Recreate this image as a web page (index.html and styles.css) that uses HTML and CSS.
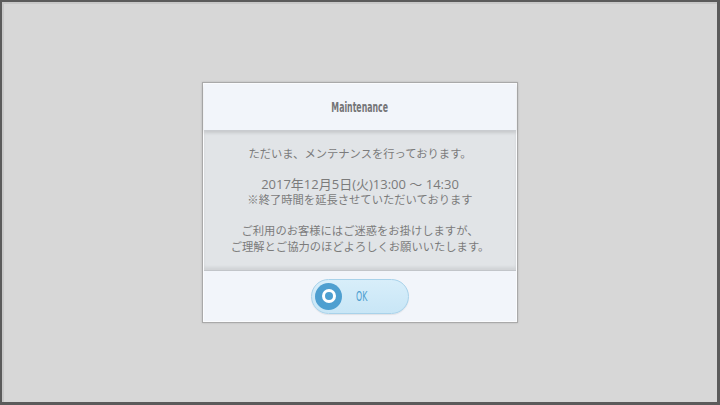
FILE: index.html
```html
<!DOCTYPE html>
<html lang="ja">
<head>
    <meta charset="UTF-8">
    <meta name="viewport" content="width=device-width, initial-scale=1.0">
    <title>Maintenance</title>
    <link rel="stylesheet" href="styles.css">
</head>
<body>
    <div class="screen">
        <div class="dialog">
            <header class="dialog-head">
                <h1>Maintenance</h1>
            </header>
            <div class="dialog-body">
                <p>ただいま、メンテナンスを行っております。</p>
                <p><span class="date">2017年12月5日(火)13:00 ～ 14:30</span><br>※終了時間を延長させていただいております</p>
                <p>ご利用のお客様にはご迷惑をお掛けしますが、<br>ご理解とご協力のほどよろしくお願いいたします。</p>
            </div>
            <footer class="dialog-foot">
                <button class="ok-btn">
                    <span class="ok-icon"></span>
                    <span class="ok-label">OK</span>
                </button>
            </footer>
        </div>
    </div>
</body>
</html>
```

FILE: styles.css
```css
html, body {
    margin: 0;
    padding: 0;
}
body {
    width: 720px;
    height: 405px;
    background-color: #d7d7d7;
    font-family: "Noto Sans CJK JP", "Noto Sans", sans-serif;
}
.screen {
    box-sizing: border-box;
    width: 720px;
    height: 405px;
    border: 2px solid #5b5b5b;
    border-right-width: 3px;
    border-bottom-width: 3px;
    box-shadow: inset 2px 2px 0 #c8c8c8;
    display: flex;
    justify-content: center;
    padding-top: 80px;
    padding-left: 1px;
}
.dialog {
    width: 312px;
    height: 237px;
    border: 1px solid #a9a9a9;
    background-color: #fbfcfe;
    padding: 1px;
    display: flex;
    flex-direction: column;
    box-shadow: 0 0 2px rgba(0, 0, 0, 0.15);
}
.dialog-head {
    height: 47px;
    background-color: #f2f5fa;
    display: flex;
    align-items: center;
    justify-content: center;
    border-bottom: 1px solid #c9ccd0;
    position: relative;
    z-index: 1;
    box-shadow: 0 2px 3px rgba(0, 0, 0, 0.12);
}
.dialog-head h1 {
    margin: 0;
    font-family: "DejaVu Sans Condensed", sans-serif;
    font-weight: bold;
    font-size: 14px;
    color: #747476;
    transform: scaleX(0.62);
}
.dialog-body {
    flex: 1;
    background-color: #e1e4e7;
    padding: 15px 0 0;
    text-align: center;
    color: #7b7b7b;
    font-size: 11.3px;
    line-height: 15.5px;
    border-bottom: 1px solid #c2c5c9;
    box-shadow: inset 0 -3px 3px rgba(0, 0, 0, 0.07);
}
.dialog-body p {
    margin: 0 0 15.5px;
}
.dialog-body .date {
    font-family: "Open Sans", "Noto Sans CJK JP", sans-serif;
    font-size: 13px;
}
.dialog-foot {
    height: 52px;
    background-color: #f2f5fa;
    display: flex;
    align-items: center;
    justify-content: center;
}
.ok-btn {
    box-sizing: border-box;
    width: 98px;
    height: 35px;
    margin-top: 1px;
    padding: 0 0 0 3px;
    border: 1px solid #a8d2ea;
    border-radius: 18px;
    background: linear-gradient(#d8eefa, #c8e6f6);
    box-shadow: 0 1px 1px rgba(0, 0, 0, 0.08);
    display: flex;
    align-items: center;
    gap: 14px;
}
.ok-icon {
    box-sizing: border-box;
    width: 27px;
    height: 27px;
    border-radius: 50%;
    background-color: #4e9fd0;
    display: flex;
    align-items: center;
    justify-content: center;
}
.ok-icon::after {
    content: "";
    box-sizing: border-box;
    width: 14px;
    height: 14px;
    border-radius: 50%;
    border: 3px solid #ffffff;
    background-color: #4e9fd0;
}
.ok-label {
    font-family: "DejaVu Sans Condensed", sans-serif;
    font-size: 14px;
    color: #4e9fd0;
    transform: scaleX(0.62);
    transform-origin: left center;
}
```
